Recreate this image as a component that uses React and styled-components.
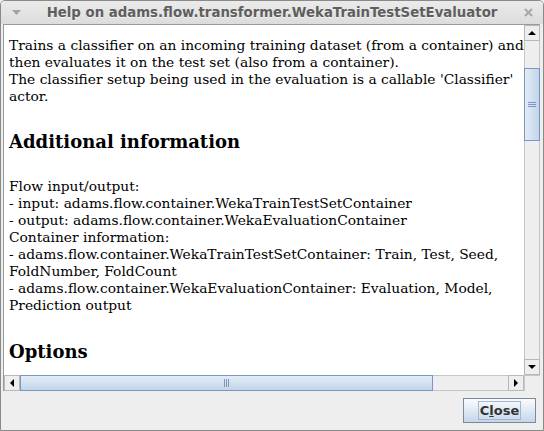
import React from 'react'
import { styled, createGlobalStyle } from 'styled-components'

const Global = createGlobalStyle`
  html, body { margin: 0; padding: 0; background: #eeeeee; }
  body { width: 544px; height: 431px; overflow: hidden; }
`

const Frame = styled.div`
  width: 544px;
  height: 431px;
  box-sizing: border-box;
  display: flex;
  flex-direction: column;
  background: #eeeeee;
  border: 1px solid #8a8a8a;
  border-radius: 5px 5px 0 0;
  overflow: hidden;
`

const TitleBar = styled.div`
  height: 23px;
  flex-shrink: 0;
  display: flex;
  align-items: center;
  background: linear-gradient(#ebebeb, #dcdcdc);
  font-family: "DejaVu Sans", sans-serif;
  font-weight: bold;
  font-size: 13.3px;
  color: #5e5e5e;
`

const Title = styled.div`
  flex: 1;
  text-align: center;
  white-space: nowrap;
  text-shadow: 0 1px 0 rgba(255,255,255,0.6);
`

const TitleIcon = styled.div`
  width: 30px;
  display: flex;
  justify-content: center;
`

const Body = styled.div`
  flex: 1;
  display: flex;
  flex-direction: column;
  padding: 0 3px 0 2px;
`

const ScrollPane = styled.div`
  flex: 1;
  display: grid;
  grid-template-columns: 1fr 16px;
  grid-template-rows: 1fr 16px;
  border-top: 1px solid #9a9a9a;
  border-left: 1px solid #9a9a9a;
`

const Viewport = styled.div`
  background: #ffffff;
  overflow: hidden;
  padding: 12px 0 0 5px;
  font-family: "DejaVu Serif", serif;
  font-size: 13.8px;
  line-height: 17px;
  color: #000000;
  white-space: nowrap;
`

const Para = styled.p`
  margin: 0 0 ${p => p.$gap || 0}px 0;
`

const Heading = styled.h2`
  margin: 0 0 ${p => p.$gap || 0}px 0;
  font-size: 18px;
  line-height: 22px;
  font-weight: bold;
`

const ScrollBar = styled.div`
  display: flex;
  flex-direction: ${p => (p.$vertical ? 'column' : 'row')};
  background: #eeeeee;
`

const ArrowButton = styled.div`
  width: 16px;
  height: 16px;
  flex-shrink: 0;
  box-sizing: border-box;
  display: flex;
  align-items: center;
  justify-content: center;
  background: #eeeeee;
  border: 1px solid #b8b8b8;
`

const Track = styled.div`
  flex: ${p => p.$grow};
  background: #eeeeee;
  border: 1px solid #c6c6c6;
  border-width: ${p => (p.$vertical ? '0 1px' : '1px 0')};
`

const Thumb = styled.div`
  flex: ${p => p.$grow};
  box-sizing: border-box;
  display: flex;
  align-items: center;
  justify-content: center;
  border: 1px solid #7c97c2;
  background: ${p =>
    p.$vertical
      ? 'linear-gradient(90deg, #e3ecf6, #c2d5ea)'
      : 'linear-gradient(#e3ecf6, #c2d5ea)'};
`

const Corner = styled.div`
  background: #eeeeee;
  border-top: 1px solid #c6c6c6;
  border-left: 1px solid #c6c6c6;
`

const Footer = styled.div`
  height: 39px;
  flex-shrink: 0;
  display: flex;
  align-items: center;
  justify-content: flex-end;
  padding-right: 7px;
`

const Button = styled.button`
  width: 73px;
  height: 25px;
  box-sizing: border-box;
  margin-bottom: 1px;
  border: 1px solid #7a8a99;
  border-radius: 0;
  background: linear-gradient(#fafcfe, #c4d6ea);
  font-family: "DejaVu Sans", sans-serif;
  font-weight: bold;
  font-size: 13px;
  color: #333333;
  padding: 0;
  display: flex;
  align-items: center;
  justify-content: center;
`

const Focus = styled.span`
  border: 1px solid #a3b8cc;
  padding: 0 1px;
  line-height: 17px;
`

const Grip = ({ vertical }) =>
  vertical ? (
    <svg width="8" height="6" viewBox="0 0 8 6">
      <path d="M0 0.5H8M0 2.5H8M0 4.5H8" stroke="#7c97c2" strokeWidth="1" />
    </svg>
  ) : (
    <svg width="6" height="8" viewBox="0 0 6 8">
      <path d="M0.5 0V8M2.5 0V8M4.5 0V8" stroke="#7c97c2" strokeWidth="1" />
    </svg>
  )

const Arrow = ({ dir }) => {
  const pts = {
    up: '0,4 4,0 8,4',
    down: '0,0 8,0 4,4',
    left: '4,0 4,8 0,4',
    right: '0,0 4,4 0,8',
  }[dir]
  const w = dir === 'up' || dir === 'down' ? 8 : 4
  const h = dir === 'up' || dir === 'down' ? 4 : 8
  return (
    <svg width={w} height={h} viewBox={`0 0 ${w} ${h}`}>
      <polygon points={pts} fill="#000" />
    </svg>
  )
}

export default function App() {
  return (
    <>
      <Global />
      <Frame>
        <TitleBar>
          <TitleIcon>
            <svg width="9" height="5" viewBox="0 0 9 5">
              <polygon points="0,0 9,0 4.5,5" fill="#a3a3a3" />
            </svg>
          </TitleIcon>
          <Title>Help on adams.flow.transformer.WekaTrainTestSetEvaluator</Title>
          <TitleIcon>
            <svg width="9" height="9" viewBox="0 0 9 9">
              <path d="M1 1L8 8M8 1L1 8" stroke="#a9a9a9" strokeWidth="2.2" />
            </svg>
          </TitleIcon>
        </TitleBar>
        <Body>
          <ScrollPane>
            <Viewport>
              <Para $gap={26}>
                Trains a classifier on an incoming training dataset (from a container) and<br />
                then evaluates it on the test set (also from a container).<br />
                The classifier setup being used in the evaluation is a callable 'Classifier'<br />
                actor.
              </Para>
              <Heading $gap={25}>Additional information</Heading>
              <Para $gap={27}>
                Flow input/output:<br />
                - input: adams.flow.container.WekaTrainTestSetContainer<br />
                - output: adams.flow.container.WekaEvaluationContainer<br />
                Container information:<br />
                - adams.flow.container.WekaTrainTestSetContainer: Train, Test, Seed,<br />
                FoldNumber, FoldCount<br />
                - adams.flow.container.WekaEvaluationContainer: Evaluation, Model,<br />
                Prediction output
              </Para>
              <Heading>Options</Heading>
            </Viewport>
            <ScrollBar $vertical>
              <ArrowButton><Arrow dir="up" /></ArrowButton>
              <Track $vertical $grow="0 0 27px" />
              <Thumb $vertical $grow="0 0 73px"><Grip vertical /></Thumb>
              <Track $vertical $grow="1" />
              <ArrowButton><Arrow dir="down" /></ArrowButton>
            </ScrollBar>
            <ScrollBar>
              <ArrowButton><Arrow dir="left" /></ArrowButton>
              <Thumb $grow="0 0 413px"><Grip /></Thumb>
              <Track $grow="1" />
              <ArrowButton><Arrow dir="right" /></ArrowButton>
            </ScrollBar>
            <Corner />
          </ScrollPane>
        </Body>
        <Footer>
          <Button>
            <Focus>C<u>l</u>ose</Focus>
          </Button>
        </Footer>
      </Frame>
    </>
  )
}
